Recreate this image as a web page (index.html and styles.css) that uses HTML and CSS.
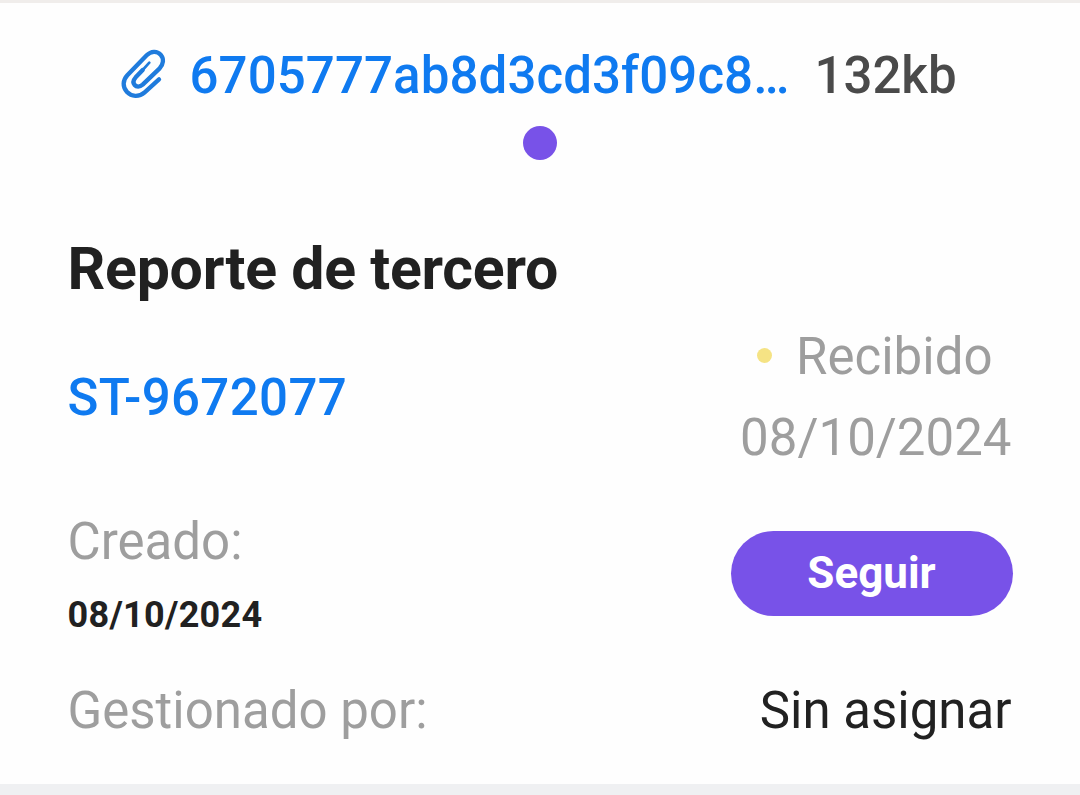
FILE: index.html
```
<!DOCTYPE html>
<html lang="es">
<head>
    <meta charset="UTF-8">
    <meta name="viewport" content="width=device-width, initial-scale=1.0">
    <title>Reporte de tercero</title>
    <link rel="stylesheet" href="styles.css">
</head>
<body>
    <main class="card">
        <div class="file">
            <svg class="file-icon" viewBox="30 27 138 150" aria-hidden="true">
                <path d="M147 118 L104 157 C87 172 64 170 51 156 C37 141 38 121 52 106 L110 46 C123 33 141 32 152 44 C163 56 160 73 149 85 L98 134 C89 142 79 141 74 135 C68 128 70 120 77 112 L98 90"/>
                <path class="file-icon-tip" d="M98 90 L118 68"/>
            </svg>
            <a href="#" class="file-name">6705777ab8d3cd3f09c8…</a>
            <span class="file-size">132kb</span>
        </div>
        <div class="pager"></div>

        <h1>Reporte de tercero</h1>

        <div class="row">
            <a href="#" class="ticket">ST-9672077</a>
            <div class="status">
                <div class="status-label"><span class="status-dot"></span>Recibido</div>
                <div class="status-date">08/10/2024</div>
            </div>
        </div>

        <div class="row created">
            <div>
                <div class="label">Creado:</div>
                <div class="created-date">08/10/2024</div>
            </div>
            <button class="button">Seguir</button>
        </div>

        <div class="row managed">
            <span class="label">Gestionado por:</span>
            <span class="value">Sin asignar</span>
        </div>
    </main>
</body>
</html>
```
FILE: styles.css
```
* {
    box-sizing: border-box;
}
body {
    margin: 0;
    background: #eff0f2;
    font-family: Roboto, sans-serif;
    font-size: 51px;
    line-height: 60px;
    color: #212121;
}
.card {
    height: 784px;
    padding: 43px 67.5px 0;
    background: #fefefe;
    border-top: 3px solid #f0edeb;
}
a {
    color: #0f7af0;
    text-decoration: none;
}
.file {
    display: flex;
    align-items: center;
    padding-left: 52px;
    font-weight: 500;
    white-space: nowrap;
}
.file-icon {
    width: 46px;
    height: 50px;
    margin: 0 24px 4px 0;
    fill: none;
    stroke: #1f7bdc;
    stroke-width: 13;
    stroke-linecap: round;
    stroke-linejoin: round;
}
.file-icon-tip {
    stroke-width: 8;
}
.file-name {
    letter-spacing: 0.1px;
}
.file-size {
    margin-left: 25px;
    color: #4a4a4a;
}
.pager {
    width: 34px;
    height: 34px;
    margin: 20px auto 0;
    border-radius: 50%;
    background: #7852e8;
}
h1 {
    margin: 74px 0 23px;
    font-size: 59px;
    line-height: 70px;
    font-weight: 700;
    letter-spacing: -0.25px;
}
.row {
    display: flex;
    justify-content: space-between;
    align-items: center;
}
.ticket {
    font-weight: 500;
    letter-spacing: 0.35px;
}
.status {
    padding-right: 1px;
    color: #9e9e9e;
}
.status-label {
    display: flex;
    align-items: center;
    justify-content: flex-end;
    padding-right: 19px;
    margin-bottom: 21px;
}
.status-dot {
    width: 15px;
    height: 15px;
    margin: 0 24px 3px 0;
    border-radius: 50%;
    background: #f5e384;
}
.created {
    margin-top: 44px;
}
.label {
    color: #9e9e9e;
}
.created-date {
    margin-top: 22px;
    font-size: 36px;
    line-height: 42px;
    font-weight: 700;
    letter-spacing: 0.3px;
}
.button {
    width: 282px;
    height: 85px;
    padding: 0 0 2px;
    margin-bottom: 1px;
    border: none;
    border-radius: 43px;
    background: #7852e8;
    color: #fff;
    font-family: inherit;
    font-size: 44px;
    font-weight: 700;
}
.managed {
    margin-top: 45px;
}
.value {
    padding-right: 1px;
}
```
